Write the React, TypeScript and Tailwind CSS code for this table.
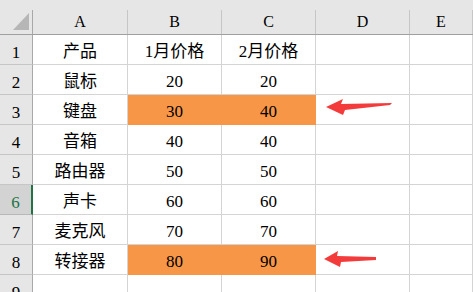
const cols = ["A", "B", "C", "D", "E"];
const widths = ["w-[95px]", "w-[94px]", "w-[94px]", "w-[94px]", "flex-1"];

const rows: string[][] = [
  ["产品", "1月价格", "2月价格"],
  ["鼠标", "20", "20"],
  ["键盘", "30", "40"],
  ["音箱", "40", "40"],
  ["路由器", "50", "50"],
  ["声卡", "60", "60"],
  ["麦克风", "70", "70"],
  ["转接器", "80", "90"],
  ["", "", ""],
];

const highlighted = [2, 7];

const Arrow = ({ points }: { points: string }) => (
  <svg
    className="pointer-events-none absolute left-0 top-0 overflow-visible"
    width="94"
    height="30"
  >
    <polygon points={points} fill="#f33b3b" />
  </svg>
);

export default function App() {
  return (
    <div
      className="relative h-[292px] w-[473px] overflow-hidden bg-white text-[17px] text-black"
      style={{ fontFamily: '"Liberation Serif", "Noto Sans CJK SC", serif' }}
    >
      <div className="h-[10px] bg-[#e6e6e6]" />
      <div className="flex h-[25px] border-b border-[#9f9f9f] bg-[#e6e6e6] text-[16px]">
        <div className="relative w-[33px] border-r border-[#a8a8a8]">
          <div className="absolute left-[13px] top-[3px] h-0 w-0 border-b-[17px] border-l-[16px] border-b-[#b6b6b6] border-l-transparent" />
        </div>
        {cols.map((c, i) => (
          <div
            key={c}
            className={`${widths[i]} flex items-center justify-center border-r border-[#c6c6c6] leading-none`}
          >
            {c}
          </div>
        ))}
      </div>
      {rows.map((r, ri) => (
        <div key={ri} className="flex h-[30px]">
          <div
            className={`flex w-[33px] items-end justify-center border-b border-r pb-[3px] leading-none ${
              ri === 5
                ? "border-b-[#b8b8b8] border-r-2 border-r-[#217346] bg-[#d3d3d3] text-[#217346]"
                : "border-b-[#c6c6c6] border-r-[#a8a8a8] bg-[#e6e6e6]"
            }`}
          >
            {ri + 1}
          </div>
          {widths.map((w, ci) => {
            const hl = highlighted.includes(ri) && (ci === 1 || ci === 2);
            return (
              <div
                key={ci}
                className={`${w} relative flex items-end justify-center border-b border-r pb-[4px] leading-none ${
                  hl ? "border-[#f79646] bg-[#f79646]" : "border-[#d4d4d4]"
                }`}
              >
                {ci < 3 ? r[ci] : ""}
                {ci === 3 && ri === 2 && (
                  <Arrow points="10,12 27,4 25,9 76,8 74,10 29,15 27,20" />
                )}
                {ci === 3 && ri === 7 && (
                  <Arrow points="8,14 22,6 21,11 60,12 60,15 25,17 24,22" />
                )}
              </div>
            );
          })}
        </div>
      ))}
    </div>
  );
}
